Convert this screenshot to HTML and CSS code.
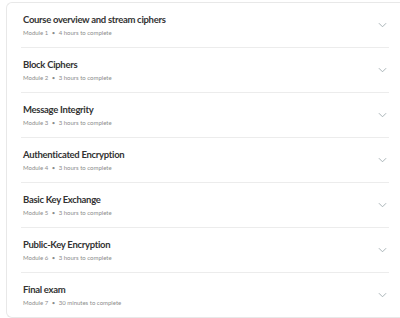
FILE: index.html
```html
<!DOCTYPE html>
<html lang="en">
<head>
   <meta charset="UTF-8">
   <title>Syllabus</title>
   <link rel="stylesheet" href="styles.css">
</head>
<body>
   <div class="card">
       <div class="module">
           <div class="info">
               <h3>Course overview and stream ciphers</h3>
               <p>Module 1 <span class="dot">•</span> 4 hours to complete</p>
           </div>
           <svg class="chevron" viewBox="0 0 10 6"><path d="M1 1l4 4 4-4"/></svg>
       </div>
       <div class="module">
           <div class="info">
               <h3>Block Ciphers</h3>
               <p>Module 2 <span class="dot">•</span> 3 hours to complete</p>
           </div>
           <svg class="chevron" viewBox="0 0 10 6"><path d="M1 1l4 4 4-4"/></svg>
       </div>
       <div class="module">
           <div class="info">
               <h3>Message Integrity</h3>
               <p>Module 3 <span class="dot">•</span> 3 hours to complete</p>
           </div>
           <svg class="chevron" viewBox="0 0 10 6"><path d="M1 1l4 4 4-4"/></svg>
       </div>
       <div class="module">
           <div class="info">
               <h3>Authenticated Encryption</h3>
               <p>Module 4 <span class="dot">•</span> 3 hours to complete</p>
           </div>
           <svg class="chevron" viewBox="0 0 10 6"><path d="M1 1l4 4 4-4"/></svg>
       </div>
       <div class="module">
           <div class="info">
               <h3>Basic Key Exchange</h3>
               <p>Module 5 <span class="dot">•</span> 3 hours to complete</p>
           </div>
           <svg class="chevron" viewBox="0 0 10 6"><path d="M1 1l4 4 4-4"/></svg>
       </div>
       <div class="module">
           <div class="info">
               <h3>Public-Key Encryption</h3>
               <p>Module 6 <span class="dot">•</span> 3 hours to complete</p>
           </div>
           <svg class="chevron" viewBox="0 0 10 6"><path d="M1 1l4 4 4-4"/></svg>
       </div>
       <div class="module">
           <div class="info">
               <h3>Final exam</h3>
               <p>Module 7 <span class="dot">•</span> 30 minutes to complete</p>
           </div>
           <svg class="chevron" viewBox="0 0 10 6"><path d="M1 1l4 4 4-4"/></svg>
       </div>
   </div>
</body>
</html>
```

FILE: styles.css
```css
* { margin: 0; padding: 0; box-sizing: border-box; }
html, body {
    background: #ffffff;
    font-family: 'Lato', sans-serif;
    overflow: hidden;
}
.card {
    width: 394px;
    margin: 2px 0 0 6px;
    padding: 0 11px 0 14px;
    border: 1px solid #e8e8e8;
    border-right: none;
    border-radius: 6px 0 0 6px;
}
.module {
    display: flex;
    align-items: center;
    justify-content: space-between;
    height: 45px;
    padding: 0 2px;
    border-bottom: 1px solid #ececec;
}
.module:last-child { border-bottom: none; height: 44px; }
.info { display: flex; flex-direction: column; gap: 3px; }
.info h3 {
    font-size: 9.5px;
    font-weight: 700;
    color: #333333;
    line-height: 12px;
    letter-spacing: -0.3px;
}
.info p {
    font-size: 6px;
    color: #8c8c8c;
    line-height: 8px;
}
.dot { margin: 0 2px; }
.chevron {
    width: 9px;
    height: 6px;
    fill: none;
    stroke: #9fabb0;
    stroke-width: 1;
}
```
